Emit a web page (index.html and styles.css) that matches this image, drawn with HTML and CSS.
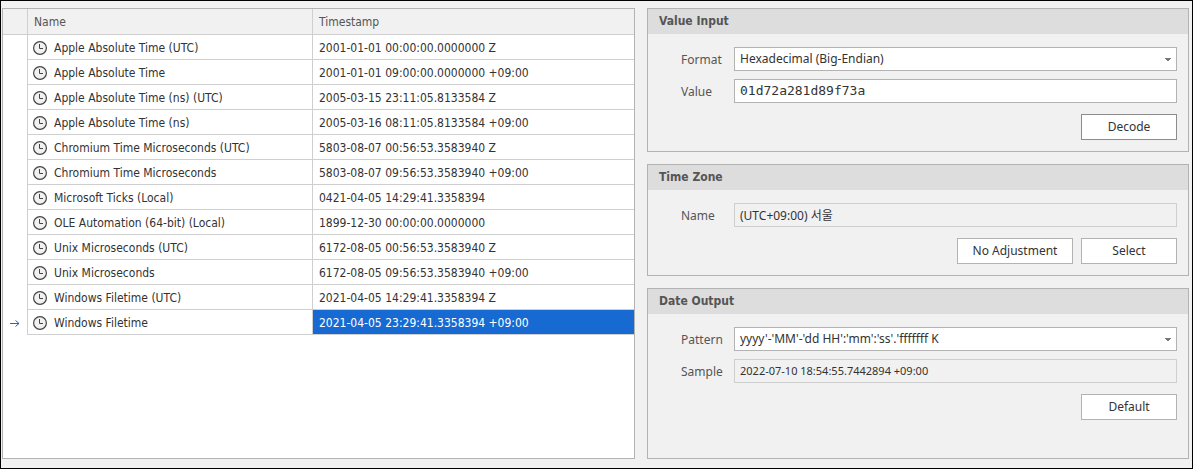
FILE: index.html
```
<!DOCTYPE html>
<html lang="en">
<head>
<meta charset="utf-8">
<title>Timestamp Decoder</title>
<link rel="stylesheet" href="styles.css">
</head>
<body>
<svg class="sprite" aria-hidden="true">
  <symbol id="clock" viewBox="0 0 14 14"><circle cx="7" cy="7" r="6.4" fill="#f1f1f1" stroke="#444" stroke-width="1.2"/><path d="M6.5 3v4.5H10" fill="none" stroke="#444" stroke-width="1"/></symbol>
  <symbol id="caret" viewBox="0 0 6 3"><path d="M0 0h6v1H5v1H4v1H2V2H1V1H0z" fill="#777"/></symbol>
</svg>
<main class="window">
  <section class="grid-panel">
    <table class="grid">
      <colgroup><col class="col-mark"><col class="col-name"><col></colgroup>
      <thead>
        <tr><th></th><th>Name</th><th>Timestamp</th></tr>
      </thead>
      <tbody>
        <tr><td></td><td><span class="cell"><svg class="clock"><use href="#clock"/></svg>Apple Absolute Time (UTC)</span></td><td>2001-01-01 00:00:00.0000000 Z</td></tr>
        <tr><td></td><td><span class="cell"><svg class="clock"><use href="#clock"/></svg>Apple Absolute Time</span></td><td>2001-01-01 09:00:00.0000000 +09:00</td></tr>
        <tr><td></td><td><span class="cell"><svg class="clock"><use href="#clock"/></svg>Apple Absolute Time (ns) (UTC)</span></td><td>2005-03-15 23:11:05.8133584 Z</td></tr>
        <tr><td></td><td><span class="cell"><svg class="clock"><use href="#clock"/></svg>Apple Absolute Time (ns)</span></td><td>2005-03-16 08:11:05.8133584 +09:00</td></tr>
        <tr><td></td><td><span class="cell"><svg class="clock"><use href="#clock"/></svg>Chromium Time Microseconds (UTC)</span></td><td>5803-08-07 00:56:53.3583940 Z</td></tr>
        <tr><td></td><td><span class="cell"><svg class="clock"><use href="#clock"/></svg>Chromium Time Microseconds</span></td><td>5803-08-07 09:56:53.3583940 +09:00</td></tr>
        <tr><td></td><td><span class="cell"><svg class="clock"><use href="#clock"/></svg>Microsoft Ticks (Local)</span></td><td>0421-04-05 14:29:41.3358394</td></tr>
        <tr><td></td><td><span class="cell"><svg class="clock"><use href="#clock"/></svg>OLE Automation (64-bit) (Local)</span></td><td>1899-12-30 00:00:00.0000000</td></tr>
        <tr><td></td><td><span class="cell"><svg class="clock"><use href="#clock"/></svg>Unix Microseconds (UTC)</span></td><td>6172-08-05 00:56:53.3583940 Z</td></tr>
        <tr><td></td><td><span class="cell"><svg class="clock"><use href="#clock"/></svg>Unix Microseconds</span></td><td>6172-08-05 09:56:53.3583940 +09:00</td></tr>
        <tr><td></td><td><span class="cell"><svg class="clock"><use href="#clock"/></svg>Windows Filetime (UTC)</span></td><td>2021-04-05 14:29:41.3358394 Z</td></tr>
        <tr><td><svg class="arrow" viewBox="0 0 10 8"><path d="M0 4.5h9M5.5 1.5L9 4.5L5.5 7.5" fill="none" stroke="#176ad1"/></svg></td><td><span class="cell"><svg class="clock"><use href="#clock"/></svg>Windows Filetime</span></td><td class="selected">2021-04-05 23:29:41.3358394 +09:00</td></tr>
      </tbody>
    </table>
  </section>
  <div class="side">
    <section class="panel">
      <h2>Value Input</h2>
      <div class="body">
        <div class="field">
          <label for="format">Format</label>
          <div class="combo"><select id="format"><option>Hexadecimal (Big-Endian)</option></select><svg class="caret"><use href="#caret"/></svg></div>
        </div>
        <div class="field">
          <label for="value">Value</label>
          <input id="value" class="mono" type="text" value="01d72a281d89f73a" spellcheck="false">
        </div>
        <div class="actions"><button class="primary" type="button">Decode</button></div>
      </div>
    </section>
    <section class="panel">
      <h2>Time Zone</h2>
      <div class="body">
        <div class="field">
          <label for="zone">Name</label>
          <input id="zone" type="text" value="(UTC+09:00) 서울" readonly>
        </div>
        <div class="actions"><button class="wide" type="button">No Adjustment</button><button type="button">Select</button></div>
      </div>
    </section>
    <section class="panel grow">
      <h2>Date Output</h2>
      <div class="body">
        <div class="field">
          <label for="pattern">Pattern</label>
          <div class="combo"><select id="pattern"><option>yyyy'-'MM'-'dd HH':'mm':'ss'.'fffffff K</option></select><svg class="caret"><use href="#caret"/></svg></div>
        </div>
        <div class="field">
          <label for="sample">Sample</label>
          <input id="sample" class="small" type="text" value="2022-07-10 18:54:55.7442894 +09:00" readonly>
        </div>
        <div class="actions"><button type="button">Default</button></div>
      </div>
    </section>
  </div>
</main>
</body>
</html>
```
FILE: styles.css
```
* { box-sizing: border-box; }

body {
  margin: 0;
  font-family: "Noto Sans", "Noto Sans CJK KR", sans-serif;
  font-size: 12px;
  color: #333;
}

.sprite { display: none; }

.window {
  display: grid;
  grid-template-columns: 633fr 542fr;
  gap: 12px;
  min-height: 100vh;
  padding: 7px 3px 9px 1px;
  border: 1px solid #000;
  background: #f1f1f1;
}

.grid-panel {
  border: 1px solid #b3b3b3;
  background: #fff;
}

.grid {
  width: 100%;
  table-layout: fixed;
  border-collapse: separate;
  border-spacing: 0;
  font-family: "DejaVu Sans Condensed", "DejaVu Sans", sans-serif;
}

.col-mark { width: 24px; }
.col-name { width: 285px; }

.grid th,
.grid td {
  height: 25px;
  padding: 1px 6px 0;
  border-bottom: 1px solid #cfcfcf;
  border-left: 1px solid #cfcfcf;
  text-align: left;
  white-space: nowrap;
}

.grid th {
  height: 26px;
  padding-top: 0;
  background: #f1f1f1;
  color: #555;
  font-weight: normal;
}

.grid th:first-child { border-left: 0; }

.grid td:first-child {
  padding: 0;
  border: 0;
}

.grid td:nth-child(2) { padding-left: 5px; }

.cell {
  display: flex;
  align-items: center;
  gap: 7px;
}

.clock {
  width: 14px;
  height: 14px;
}

.arrow {
  display: block;
  width: 10px;
  height: 8px;
  margin: 0 auto;
}

.grid .selected {
  background: #176ad1;
  color: #fff;
}

.side {
  display: flex;
  flex-direction: column;
  gap: 12px;
}

.panel { border: 1px solid #b3b3b3; }
.grow { flex: 1; }

.panel h2 {
  margin: 0;
  padding: 0 11px;
  background: #ddd;
  color: #555;
  font-family: "DejaVu Sans Condensed", "DejaVu Sans", sans-serif;
  font-size: 12px;
  font-weight: bold;
  line-height: 25px;
}

.body {
  display: flex;
  flex-direction: column;
  gap: 8px;
  padding: 13px 11px 11px 33px;
}

.field {
  display: grid;
  grid-template-columns: 53px 1fr;
  align-items: center;
}

.field label { color: #555; }

.field input,
.combo select {
  display: block;
  width: 100%;
  height: 24px;
  padding: 0 5px 1px;
  border: 1px solid #b3b3b3;
  border-radius: 0;
  outline: 0;
  background: #fff;
  color: #333;
  font: inherit;
}

.field input[readonly] {
  border-color: #cfcfcf;
  background: #f1f1f1;
}

.field .mono {
  font-family: "DejaVu Sans Mono", monospace;
  font-size: 13px;
}

.field .small { font-size: 11px; }

.combo { position: relative; }
.combo select { appearance: none; }

.caret {
  position: absolute;
  top: 11px;
  right: 6px;
  width: 6px;
  height: 3px;
  pointer-events: none;
}

.actions {
  display: flex;
  justify-content: flex-end;
  gap: 8px;
  padding-top: 3px;
}

.actions button {
  width: 96px;
  height: 26px;
  padding: 0 0 1px;
  border: 1px solid #b3b3b3;
  background: #fff;
  color: #333;
  font: inherit;
}

.actions .wide { width: 116px; }
.actions .primary { border-color: #8c8c8c; }
```
